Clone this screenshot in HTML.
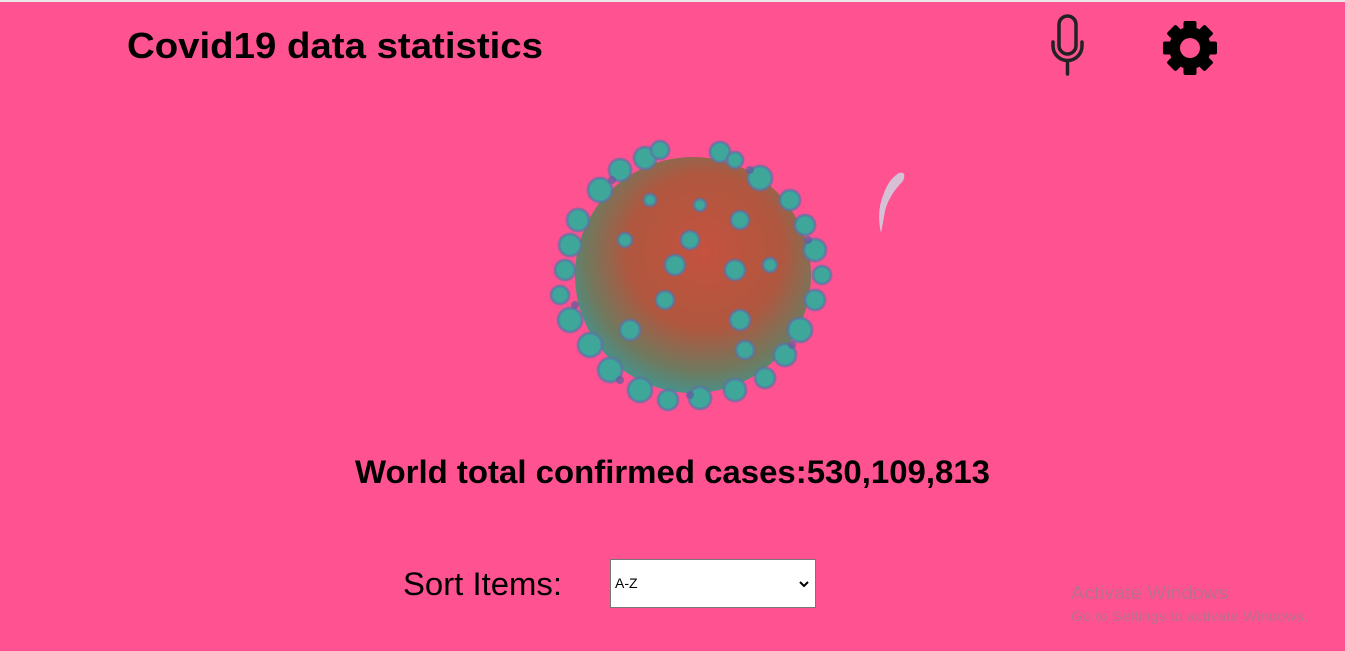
<!DOCTYPE html>
<html><head><meta charset="utf-8"><style>
html,body{margin:0;padding:0;width:1345px;height:651px;overflow:hidden;background:#ff5290;}
body{position:relative;font-family:"Liberation Sans",Arial,sans-serif;}
.top{position:absolute;left:0;top:0;width:1345px;height:2px;background:#e8e8e8}
svg{position:absolute;left:0;top:0}
.sel{position:absolute;left:610px;top:559px;width:206px;height:49px;background:#fff;border:1px solid #777;box-sizing:border-box;font:14px "Liberation Sans",sans-serif;}
</style></head><body>
<div class="top"></div>
<svg width="1345" height="651" viewBox="0 0 1345 651">
<defs>
<radialGradient id="bg" cx="0.55" cy="0.4" r="0.6">
<stop offset="0" stop-color="#c4523f"/><stop offset="0.55" stop-color="#b0573f"/><stop offset="0.85" stop-color="#6f7a5f"/><stop offset="1" stop-color="#4b8f86"/>
</radialGradient>
</defs>
<text x="127" y="58" font-size="36" font-weight="bold" textLength="416" lengthAdjust="spacingAndGlyphs" fill="#000">Covid19 data statistics</text>
<text x="355" y="483" font-size="32" font-weight="bold" textLength="635" lengthAdjust="spacingAndGlyphs" fill="#000">World total confirmed cases:530,109,813</text>
<text x="403" y="595" font-size="32" textLength="159" lengthAdjust="spacingAndGlyphs" fill="#000">Sort Items:</text>
<text x="1071" y="599" font-size="18" textLength="157" lengthAdjust="spacingAndGlyphs" fill="#b8708f">Activate Windows</text>
<text x="1071" y="621" font-size="14" textLength="237" lengthAdjust="spacingAndGlyphs" fill="#b8708f">Go to Settings to activate Windows.</text>
<g fill="none" stroke="#222" stroke-width="3.5" stroke-linecap="round">
<rect x="1059" y="16" width="17" height="38" rx="8.5"/>
<path d="M1053 42 v4 a14.5 14.5 0 0 0 29 0 v-4"/>
<path d="M1067.5 61 V74"/>
</g>
<g transform="translate(1190,48)" fill="#000">
<circle r="21"/>
<rect x="-6.5" y="-27" width="13" height="54" rx="2"/>
<rect x="-6.5" y="-27" width="13" height="54" rx="2" transform="rotate(45)"/>
<rect x="-6.5" y="-27" width="13" height="54" rx="2" transform="rotate(90)"/>
<rect x="-6.5" y="-27" width="13" height="54" rx="2" transform="rotate(135)"/>
<circle r="10" fill="#ff5290"/>
</g>
<g>
<circle cx="693" cy="275" r="118" fill="url(#bg)"/>
<g fill="#3fa79a" stroke="#5b6fa8" stroke-width="3" stroke-opacity="0.6">
<circle cx="600" cy="190" r="12"/><circle cx="620" cy="170" r="11"/><circle cx="645" cy="158" r="11"/><circle cx="660" cy="150" r="9"/>
<circle cx="720" cy="152" r="10"/><circle cx="735" cy="160" r="8"/><circle cx="760" cy="178" r="12"/><circle cx="790" cy="200" r="10"/>
<circle cx="805" cy="225" r="10"/><circle cx="815" cy="250" r="11"/><circle cx="822" cy="275" r="9"/><circle cx="815" cy="300" r="10"/>
<circle cx="800" cy="330" r="12"/><circle cx="785" cy="355" r="11"/><circle cx="765" cy="378" r="10"/><circle cx="735" cy="390" r="11"/>
<circle cx="700" cy="398" r="11"/><circle cx="668" cy="400" r="10"/><circle cx="640" cy="390" r="12"/><circle cx="610" cy="370" r="12"/>
<circle cx="590" cy="345" r="12"/><circle cx="570" cy="320" r="12"/><circle cx="560" cy="295" r="9"/><circle cx="565" cy="270" r="10"/>
<circle cx="570" cy="245" r="11"/><circle cx="578" cy="220" r="11"/>
<circle cx="675" cy="265" r="10"/><circle cx="690" cy="240" r="9"/><circle cx="735" cy="270" r="10"/><circle cx="740" cy="220" r="9"/>
<circle cx="665" cy="300" r="9"/><circle cx="740" cy="320" r="10"/><circle cx="745" cy="350" r="9"/><circle cx="630" cy="330" r="10"/>
<circle cx="650" cy="200" r="6"/><circle cx="700" cy="205" r="6"/><circle cx="625" cy="240" r="7"/><circle cx="770" cy="265" r="7"/>
</g>
<g fill="#5a5f9e" opacity="0.7">
<circle cx="612" cy="180" r="4"/><circle cx="750" cy="170" r="4"/><circle cx="808" cy="240" r="4"/><circle cx="792" cy="345" r="4"/><circle cx="620" cy="380" r="4"/><circle cx="575" cy="305" r="4"/><circle cx="690" cy="395" r="4"/>
</g>
<path d="M899 173 q8 -2 4 8 q-14 14 -18 30 q-2 12 -4 22 q-5 -22 3 -40 q5 -14 15 -20z" fill="#cfd4e2" opacity="0.85"/>
</g>
</svg>
<div class="sel"><span style="position:absolute;left:4px;top:15px">A-Z</span>
<svg width="10" height="8" style="left:188px;top:20px" viewBox="0 0 10 8"><path d="M1 2 L5 6 L9 2" fill="none" stroke="#000" stroke-width="2"/></svg></div>
</body></html>
